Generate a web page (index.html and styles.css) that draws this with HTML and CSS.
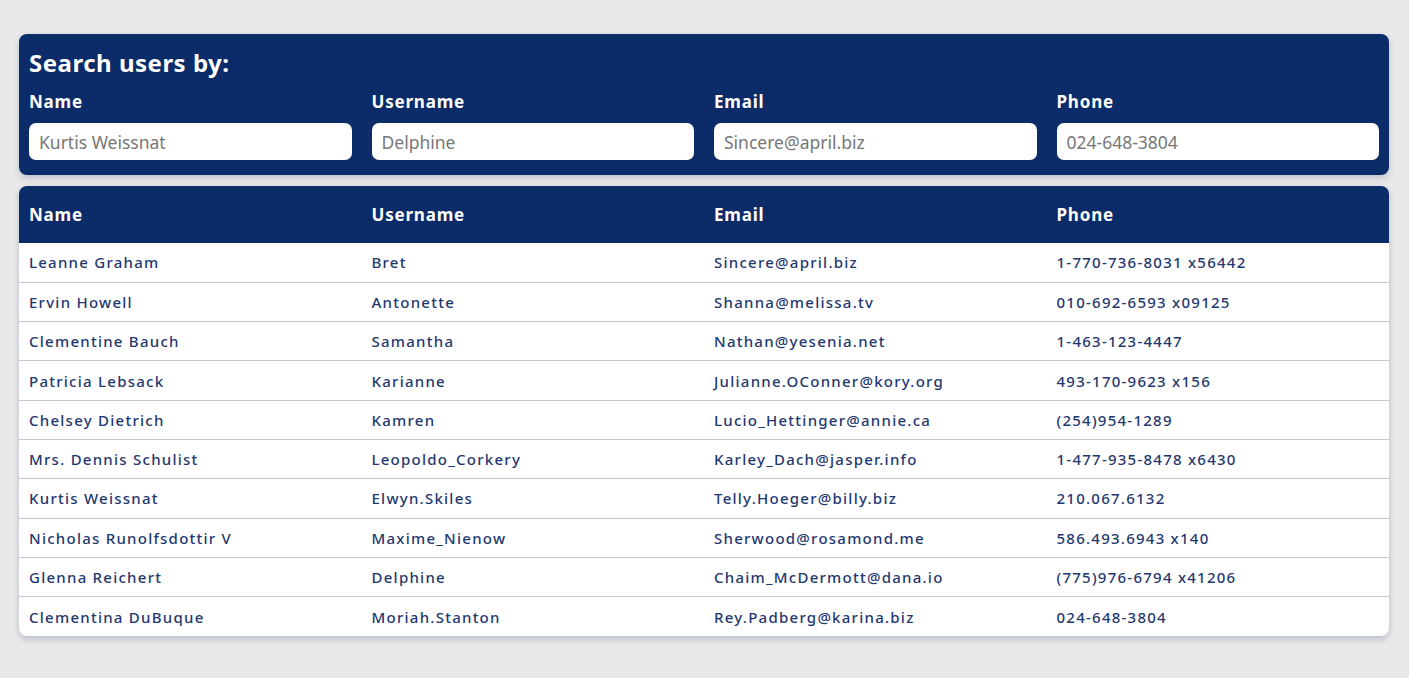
FILE: index.html
```html
<!DOCTYPE html>
<html>
<head>
<meta charset="utf-8">
<link rel="stylesheet" href="styles.css">
</head>
<body>
<main class="page">
  <section class="search-card">
    <h1 class="search-title">Search users by:</h1>
    <div class="search-grid">
      <label class="field"><span class="field-label">Name</span><input class="field-input" placeholder="Kurtis Weissnat"></label>
      <label class="field"><span class="field-label">Username</span><input class="field-input" placeholder="Delphine"></label>
      <label class="field"><span class="field-label">Email</span><input class="field-input" placeholder="Sincere@april.biz"></label>
      <label class="field"><span class="field-label">Phone</span><input class="field-input" placeholder="024-648-3804"></label>
    </div>
  </section>
  <section class="table-card">
    <table class="users">
      <thead>
        <tr><th>Name</th><th>Username</th><th>Email</th><th>Phone</th></tr>
      </thead>
      <tbody>
        <tr><td>Leanne Graham</td><td>Bret</td><td>Sincere@april.biz</td><td>1-770-736-8031 x56442</td></tr>
        <tr><td>Ervin Howell</td><td>Antonette</td><td>Shanna@melissa.tv</td><td>010-692-6593 x09125</td></tr>
        <tr><td>Clementine Bauch</td><td>Samantha</td><td>Nathan@yesenia.net</td><td>1-463-123-4447</td></tr>
        <tr><td>Patricia Lebsack</td><td>Karianne</td><td>Julianne.OConner@kory.org</td><td>493-170-9623 x156</td></tr>
        <tr><td>Chelsey Dietrich</td><td>Kamren</td><td>Lucio_Hettinger@annie.ca</td><td>(254)954-1289</td></tr>
        <tr><td>Mrs. Dennis Schulist</td><td>Leopoldo_Corkery</td><td>Karley_Dach@jasper.info</td><td>1-477-935-8478 x6430</td></tr>
        <tr><td>Kurtis Weissnat</td><td>Elwyn.Skiles</td><td>Telly.Hoeger@billy.biz</td><td>210.067.6132</td></tr>
        <tr><td>Nicholas Runolfsdottir V</td><td>Maxime_Nienow</td><td>Sherwood@rosamond.me</td><td>586.493.6943 x140</td></tr>
        <tr><td>Glenna Reichert</td><td>Delphine</td><td>Chaim_McDermott@dana.io</td><td>(775)976-6794 x41206</td></tr>
        <tr><td>Clementina DuBuque</td><td>Moriah.Stanton</td><td>Rey.Padberg@karina.biz</td><td>024-648-3804</td></tr>
      </tbody>
    </table>
  </section>
</main>
</body>
</html>
```

FILE: styles.css
```css
* { box-sizing: border-box; }
html, body { margin: 0; padding: 0; }
body {
  background: #e8e8e8;
  font-family: "Noto Sans", "Open Sans", sans-serif;
}
.page {
  padding: 34px 20px 20px 19px;
  display: flex;
  flex-direction: column;
  gap: 11px;
}
.search-card {
  background: #0c2b69;
  border-radius: 8px;
  padding: 13px 10px 15px 10px;
  box-shadow: 0 3px 6px rgba(12, 43, 105, 0.2);
}
.search-title {
  margin: 0 0 11px 0;
  color: #fff;
  font-size: 24px;
  font-weight: 700;
  line-height: 32px;
  letter-spacing: 0.5px;
}
.search-grid {
  display: grid;
  grid-template-columns: repeat(4, 1fr);
  column-gap: 20px;
}
.field {
  display: flex;
  flex-direction: column;
  gap: 10px;
}
.field-label {
  color: #fff;
  font-weight: 700;
  font-size: 17px;
  line-height: 23px;
  letter-spacing: 0.8px;
}
.field-input {
  height: 37px;
  border: none;
  border-radius: 7px;
  padding: 0 10px;
  font-family: "Noto Sans", sans-serif;
  font-size: 17.5px;
  color: #333;
  outline: none;
}
.field-input::placeholder { color: #777; }
.table-card {
  background: #fff;
  border-radius: 8px;
  overflow: hidden;
  box-shadow: 0 3px 6px rgba(12, 43, 105, 0.22);
}
.users {
  width: 100%;
  border-collapse: collapse;
  table-layout: fixed;
}
.users th {
  background: #0c2b69;
  color: #fff;
  text-align: left;
  font-size: 17px;
  font-weight: 700;
  letter-spacing: 0.8px;
  height: 57px;
  padding: 0 10px;
}
.users td {
  color: #1f3870;
  font-size: 15px;
  font-weight: 500;
  letter-spacing: 1.25px;
  height: 39.3px;
  padding: 0 10px;
  border-top: 1px solid #c8c8c8;
}
.users tbody tr:first-child td { border-top: none; }
```
